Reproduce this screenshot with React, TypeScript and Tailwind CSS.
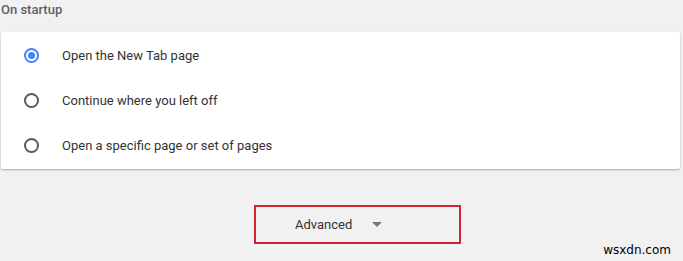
import React from "react";

function Radio({ checked }: { checked?: boolean }) {
  return (
    <span
      className={
        "flex h-[15px] w-[15px] shrink-0 items-center justify-center rounded-full border-2 " +
        (checked ? "border-[#4285f4]" : "border-[#5a5a5a]")
      }
    >
      {checked && <span className="h-[7px] w-[7px] rounded-full bg-[#4285f4]" />}
    </span>
  );
}

export default function App() {
  const items = [
    { label: "Open the New Tab page", checked: true },
    { label: "Continue where you left off" },
    { label: "Open a specific page or set of pages" },
  ];
  return (
    <div
      className="relative h-[261px] w-[683px] overflow-hidden bg-[#f1f1f1]"
      style={{ fontFamily: "Roboto, 'Liberation Sans', sans-serif" }}
    >
      <div className="pl-[1px] pt-[1px] text-[13px] font-medium leading-[18px] text-[#5f5f5f]">
        On startup
      </div>
      <div className="ml-[1px] mt-[13px] w-[679px] rounded-[2px] bg-white py-[1px] shadow-[0_1px_2px_rgba(0,0,0,0.3)]">
        {items.map((it) => (
          <div key={it.label} className="flex h-[45px] items-center pl-[23px]">
            <Radio checked={it.checked} />
            <span className="ml-[23px] text-[13px] text-[#333]">{it.label}</span>
          </div>
        ))}
      </div>
      <div className="mt-[36px] ml-[254px] flex h-[39px] w-[207px] items-center border-2 border-[#d0242f] pl-[39px]">
        <span className="text-[13px] text-[#333]">Advanced</span>
        <svg className="ml-[20px]" width="10" height="5" viewBox="0 0 10 5">
          <path d="M0 0 L10 0 L5 5 Z" fill="#777" />
        </svg>
      </div>
      <div
        className="absolute bottom-[2px] right-[12px] text-[12px] text-black"
        style={{ fontFamily: "'DejaVu Sans', sans-serif" }}
      >
        wsxdn.com
      </div>
    </div>
  );
}
